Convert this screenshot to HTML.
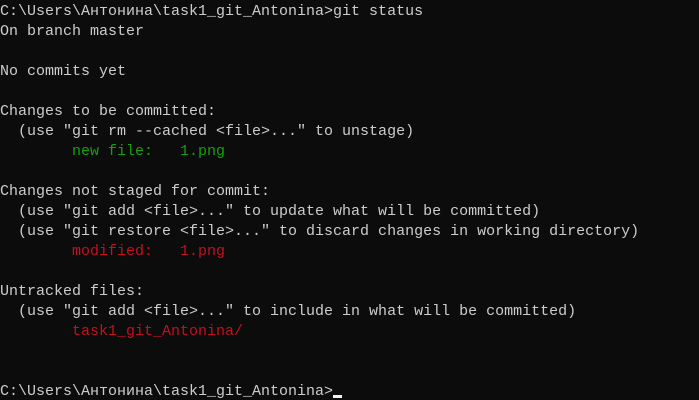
<!DOCTYPE html>
<html><head><meta charset="utf-8"><style>
html,body{margin:0;padding:0;background:#0c0c0c;width:699px;height:400px;overflow:hidden}
pre{margin:0;padding:2px 0 0 0;font-family:"Liberation Mono","DejaVu Sans Mono",monospace;font-size:15px;line-height:20px;color:#cccccc;white-space:pre}
.g{color:#13a10e}.r{color:#c50f1f}
.cur{display:inline-block;width:9px;height:3px;background:#f2f2f2;vertical-align:-3px}
</style></head><body><pre>C:\Users\Антонина\task1_git_Antonina&gt;git status
On branch master

No commits yet

Changes to be committed:
  (use "git rm --cached &lt;file&gt;..." to unstage)
<span class="g">        new file:   1.png</span>

Changes not staged for commit:
  (use "git add &lt;file&gt;..." to update what will be committed)
  (use "git restore &lt;file&gt;..." to discard changes in working directory)
<span class="r">        modified:   1.png</span>

Untracked files:
  (use "git add &lt;file&gt;..." to include in what will be committed)
<span class="r">        task1_git_Antonina/</span>


C:\Users\Антонина\task1_git_Antonina&gt;<span class="cur"></span></pre></body></html>
